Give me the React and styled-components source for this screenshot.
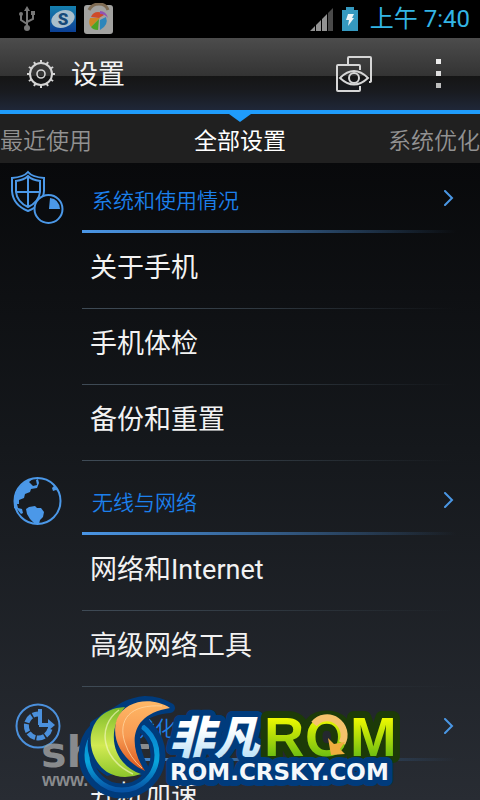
import React from "react";
import styled, { createGlobalStyle } from "styled-components";

const GlobalStyle = createGlobalStyle`
  * {
    box-sizing: border-box;
  }

  body {
    margin: 0;
    background: #000;
    font-family: Roboto, "Noto Sans CJK SC", sans-serif;
    color: #f2f2f2;
  }

  button {
    margin: 0;
    padding: 0;
    border: 0;
    background: none;
    color: inherit;
    font: inherit;
    text-align: left;
    cursor: pointer;
  }

  svg {
    display: block;
  }
`;

const Screen = styled.div`
  position: relative;
  height: 100vh;
  overflow: hidden;
  display: flex;
  flex-direction: column;
`;

const StatusBar = styled.div`
  flex: none;
  height: 38px;
  padding: 0 10px 0 16px;
  display: flex;
  align-items: center;
  justify-content: space-between;
  background: #000;
`;

const StatusGroup = styled.div`
  display: flex;
  align-items: center;
  gap: ${(props) => props.$gap}px;
`;

const Clock = styled.time`
  padding-left: 4px;
  color: #33b5e5;
  font-size: 24px;
  font-weight: 400;
  line-height: 36px;
`;

const ActionBar = styled.header`
  flex: none;
  height: 72px;
  padding: 0 26px;
  display: flex;
  align-items: center;
  background: linear-gradient(#4c4c4c 0, #333 38px, #151515 38px, #191b20 54px, #1f2738 100%);
`;

const Title = styled.h1`
  flex: 1;
  margin: 0;
  padding: 2px 0 0 15px;
  font-size: 27px;
  font-weight: 400;
  line-height: 36px;
`;

const Actions = styled.div`
  display: flex;
  gap: 32px;
`;

const IconButton = styled.button`
  width: ${(props) => props.$width}px;
  height: 48px;
  display: flex;
  align-items: center;
  justify-content: center;
`;

const TabBar = styled.nav`
  position: relative;
  flex: none;
  height: 53px;
  border-top: 4px solid #1f9cfb;
  display: flex;
  align-items: center;
  justify-content: space-between;
  background: #202020;

  &::after {
    content: "";
    position: absolute;
    top: 0;
    left: 50%;
    margin-left: -11px;
    border: 11px solid transparent;
    border-top: 8px solid #1f9cfb;
    border-bottom: 0;
  }
`;

const Tab = styled.button`
  padding-top: 6px;
  color: ${(props) => (props.$active ? "#fff" : "#929292")};
  font-size: 23px;
  font-weight: ${(props) => (props.$active ? 400 : 350)};
  line-height: 36px;
`;

const List = styled.main`
  flex: 1;
  min-height: 0;
  overflow: hidden;
  background: linear-gradient(#08090b, #15181c 45%, #282c33);
`;

const Section = styled.section`
  display: grid;
  grid-template-columns: 82px 1fr;

  & + & {
    padding-top: 4px;
  }
`;

const SectionIcon = styled.div`
  height: 70px;
  display: flex;
  align-items: center;
  padding-left: 8px;
`;

const SectionHeader = styled.button`
  width: 100%;
  height: 70px;
  padding: 0 26px 0 10px;
  display: flex;
  align-items: center;
  justify-content: space-between;
  background: linear-gradient(90deg, #4a96e6, #35608f 45%, transparent 94%) bottom / 100% 3px no-repeat;
`;

const SectionTitle = styled.span`
  padding-top: 6px;
  color: #1c80ec;
  font-size: 21px;
  font-weight: 350;
  line-height: 30px;
`;

const Item = styled.button`
  display: block;
  width: 100%;
  height: 76px;
  padding: 0 0 6px 8px;
  background: linear-gradient(90deg, #3f4b56, #2f3840 45%, transparent 94%) bottom / 100% 1px no-repeat;
  font-size: 27px;
  line-height: 36px;
`;

const Watermark = styled.svg`
  position: absolute;
  left: 40px;
  bottom: 0;
  pointer-events: none;
  font-weight: bold;

  text {
    paint-order: stroke;
    stroke-linejoin: round;
  }
`;

const UsbIcon = () => (
  <svg width="21" height="26" viewBox="0 0 21 26" fill="none" stroke="#777" strokeWidth="2">
    <path d="M11 21V3M11 18L5 14V9M11 16l6-3V8" />
    <path d="M11 0l3 5H8zM15 5h4v4h-4z" fill="#777" stroke="none" />
    <circle cx="5" cy="8" r="2" fill="#777" stroke="none" />
    <circle cx="11" cy="22" r="3" fill="#777" stroke="none" />
  </svg>
);

const SogouIcon = () => (
  <svg width="26" height="26" viewBox="0 0 26 26">
    <defs>
      <linearGradient id="sogou" x2="0" y2="1">
        <stop stopColor="#1580ae" />
        <stop offset="1" stopColor="#0b3f94" />
      </linearGradient>
    </defs>
    <rect width="26" height="26" fill="url(#sogou)" />
    <ellipse cx="13" cy="13" rx="12" ry="8.5" fill="#a9bfcc" transform="rotate(-20 13 13)" />
    <text x="13" y="19" fontSize="17" fontWeight="900" textAnchor="middle" fill="#164a79">
      S
    </text>
  </svg>
);

const MarketIcon = () => (
  <svg width="30" height="32" viewBox="0 0 30 32">
    <rect x="0" y="2" width="29" height="29" rx="3" fill="#a2a2a0" />
    <path d="M5 7Q8 1 15 1t9 6" fill="none" stroke="#7f6c54" strokeWidth="3" />
    <path d="M7 14q2-5 7-5 4 0 6 3l-5 3z" fill="#cf4a28" />
    <path d="M6 15l10 0-9 9q-3-3-1-9z" fill="#cf8422" />
    <path d="M15 16l-1 11q-5 0-7-3z" fill="#4da324" />
    <path d="M16 17l6-3q3 8-6 13z" fill="#2d86bb" />
    <path d="M16 8q6 0 8 7-3-4-8-4z" fill="#9252b2" />
  </svg>
);

const SignalIcon = () => (
  <svg width="24" height="23" viewBox="0 0 24 23">
    <path d="M0 23l5-5v5zM6 17l5-5v11H6zM12 11l5-5v17h-5z" fill="#929292" />
    <path d="M18 5l5-5v23h-5z" fill="#4a4a4a" />
  </svg>
);

const BatteryIcon = () => (
  <svg width="16" height="24" viewBox="0 0 16 24">
    <path d="M4 0h8v3h4v21H0V3h4z" fill="#3599c0" />
    <path d="M6 7h6l-2 4h2l-6 8 1-6H4z" fill="#eef5f8" />
  </svg>
);

const teeth = Array.from({ length: 12 }, (_, i) => i * 30);

const GearIcon = () => (
  <svg width="30" height="30" viewBox="0 0 30 30" fill="none" stroke="#d4d4d4" strokeWidth="2">
    <circle cx="15" cy="15" r="11" />
    <circle cx="15" cy="15" r="4" strokeWidth="1.6" />
    {teeth.map((angle) => (
      <path key={angle} d="M15 4V1" transform={`rotate(${angle} 15 15)`} />
    ))}
  </svg>
);

const PreviewIcon = () => (
  <svg width="36" height="36" viewBox="0 0 36 36" fill="none" stroke="#d6d6d6" strokeWidth="2">
    <path d="M12 8V2q0-1 1-1h21q1 0 1 1v23q0 1-2 1" />
    <path d="M24 14v-4q0-1-1-1H2q-1 0-1 1v24q0 1 1 1h21q1 0 1-1v-4" />
    <path d="M4 22q14-14 28 0-14 13-28 0z" />
    <circle cx="18" cy="22" r="5" />
  </svg>
);

const MenuIcon = () => (
  <svg width="5" height="30" viewBox="0 0 5 30">
    <rect width="5" height="5" fill="#ededed" />
    <rect y="12" width="5" height="5" fill="#dedede" />
    <rect y="24" width="5" height="5" fill="#bdbdbd" />
  </svg>
);

const Chevron = () => (
  <svg width="10" height="16" viewBox="0 0 10 16" fill="none" stroke="#4a97e4" strokeWidth="2" strokeLinecap="round">
    <path d="M1 1l7 7-7 7" />
  </svg>
);

const ShieldIcon = () => (
  <svg width="58" height="56" viewBox="0 0 58 56" fill="none" stroke="#4b98e8" strokeWidth="2">
    <path d="M20 2q-4 5-16 6v13q1 14 16 20 15-6 16-20V8Q24 7 20 2z" />
    <path d="M20 6q-4 4-12 5v11q1 10 12 15 11-5 12-15V11q-8-1-12-5zM20 6v31M8 22h24" />
    <circle cx="40.5" cy="39" r="14" fill="#0a0c0f" />
    <path d="M41 39l1-11q9 1 10 11z" fill="#4b98e8" stroke="none" />
  </svg>
);

const GlobeIcon = () => (
  <svg width="58" height="56" viewBox="0 0 58 56">
    <circle cx="29.5" cy="29" r="23" fill="none" stroke="#4b98e8" strokeWidth="2" />
    <path
      d="M11 16q6-8 15-10l-5 4 4 4 4-1-1-5 2-1 1 4-2 5-6 1-1 3-5 2-1 4-5 2v4h-2l1 4 4 1 1 4-2 1-4-5-3-1Q6 22 11 16z"
      fill="#4b98e8"
    />
    <path d="M18 37l3-2 6-1 2 2h4l3 4-1 5-3 3-1 4h-4l-5-5-3-5zM42 10q6 3 9 9l-3-1-3 1-1-3 2-2z" fill="#4b98e8" />
  </svg>
);

const BoostIcon = () => (
  <svg width="58" height="56" viewBox="0 0 58 56" fill="none" stroke="#4b90dc">
    <circle cx="30" cy="28" r="21.5" strokeWidth="2" />
    <path d="M42 31a12 12 0 1 1-12-15" strokeWidth="5" strokeDasharray="8 1.5" />
    <path d="M32 11v16M31 27h10" strokeWidth="4" />
    <path d="M40 21l7 6-7 6z" fill="#4b90dc" stroke="none" />
  </svg>
);

// Watermark pieces: grey site name, blue ring mark, then the word marks
const RomLogo = () => (
  <Watermark width="370" height="105" viewBox="-40 0 370 105" role="img" aria-label="非凡ROM">
    <defs>
      <linearGradient id="lime" x2="0" y2="1">
        <stop stopColor="#79b928" />
        <stop offset=".55" stopColor="#d2ea53" />
        <stop offset="1" stopColor="#8dc62b" />
      </linearGradient>
      <linearGradient id="orange" x2="0" y2="1">
        <stop stopColor="#ffb866" />
        <stop offset=".5" stopColor="#f79a52" />
        <stop offset="1" stopColor="#d9541a" />
      </linearGradient>
      <linearGradient id="ice" x2="0" y2="1">
        <stop offset=".4" stopColor="#fff" />
        <stop offset="1" stopColor="#a8d9f5" />
      </linearGradient>
      <linearGradient id="green" x2="0" y2="1">
        <stop offset=".2" stopColor="#f0fa00" />
        <stop offset="1" stopColor="#46ab17" />
      </linearGradient>
      <linearGradient id="ring" x2="0" y2="1">
        <stop stopColor="#0878c9" />
        <stop offset=".6" stopColor="#08a5dc" />
        <stop offset="1" stopColor="#0753a5" />
      </linearGradient>
    </defs>
    <g fill="#9b9d9f" fillOpacity=".85">
      <text x="-39" y="72" fontSize="43" fontFamily="DejaVu Sans">
        sh
      </text>
      <text x="-38" y="91" fontSize="18" fontFamily="Liberation Sans">
        www.
      </text>
      <path d="M57 49h12v5H57z" />
    </g>
    <g fill="none" stroke="#003b7c" strokeLinejoin="round">
      <circle cx="42" cy="60" r="36" strokeWidth="15" />
      <path d="M44 12Q54 7 65 6q14 0 25 7-22 2-30 12-12 20 5 51L35 70 15 30z" fill="#003b7c" strokeWidth="10" />
    </g>
    <circle cx="42" cy="60" r="35" fill="none" stroke="url(#ring)" strokeWidth="5" />
    <path
      d="M45 12Q60 12 70 26l-8 5-10 44-25 6Q5 68 8 45 14 12 45 12z"
      fill="#003b7c"
    />
    <path d="M45 12C4 14 2 60 27 77q15 9 34 2C38 72 22 42 45 12z" fill="url(#lime)" />
    <path d="M39 15C16 32 22 64 53 79" fill="none" stroke="#f3f7bd" strokeWidth="1.5" opacity=".65" />
    <path d="M90 13C73 2 46 4 37 24c-7 20 6 42 28 52C50 54 46 20 90 13z" fill="url(#orange)" />
    <path d="M82 11C51 9 37 24 45 48q5 15 17 25" fill="none" stroke="#ffd6a0" opacity=".8" />
    <text
      x="89"
      y="59"
      fill="url(#ice)"
      stroke="#003b7c"
      strokeWidth="12"
      fontSize="45"
      fontWeight="900"
      fontStyle="italic"
      fontFamily="Noto Sans CJK SC"
    >
      非凡
    </text>
    <text
      x="184 225 270"
      y="61"
      fill="url(#green)"
      stroke="#1c3a08"
      strokeWidth="14"
      fontSize="56"
      fontFamily="Liberation Sans"
    >
      ROM
    </text>
    <path d="M234 29A17 17 0 0 1 262 48" fill="none" stroke="#f6c36b" strokeWidth="7" />
    <path d="M248 43l3 17 14-1-5-5 5-7-11 2z" fill="#efad3e" />
    <text x="90" y="85" fill="#f4f8fb" stroke="#003b7c" strokeWidth="12" fontSize="23" fontFamily="DejaVu Sans">
      ROM.CRSKY.COM
    </text>
  </Watermark>
);

const sections = [
  { title: "系统和使用情况", Icon: ShieldIcon, items: ["关于手机", "手机体检", "备份和重置"] },
  { title: "无线与网络", Icon: GlobeIcon, items: ["网络和Internet", "高级网络工具"] },
  { title: "系统优化", Icon: BoostIcon, items: ["开机加速"] },
];

const App = () => {
  return (
    <Screen>
      <GlobalStyle />
      <StatusBar>
        <StatusGroup $gap={13}>
          <UsbIcon />
          <StatusGroup $gap={8}>
            <SogouIcon />
            <MarketIcon />
          </StatusGroup>
        </StatusGroup>
        <StatusGroup $gap={8}>
          <SignalIcon />
          <BatteryIcon />
          <Clock>上午 7:40</Clock>
        </StatusGroup>
      </StatusBar>
      <ActionBar>
        <GearIcon />
        <Title>设置</Title>
        <Actions>
          <IconButton $width={72} aria-label="预览">
            <PreviewIcon />
          </IconButton>
          <IconButton $width={32} aria-label="菜单">
            <MenuIcon />
          </IconButton>
        </Actions>
      </ActionBar>
      <TabBar>
        <Tab>最近使用</Tab>
        <Tab $active>全部设置</Tab>
        <Tab>系统优化</Tab>
      </TabBar>
      <List>
        {sections.map(({ title, Icon, items }) => (
          <Section key={title}>
            <SectionIcon>
              <Icon />
            </SectionIcon>
            <div>
              <SectionHeader>
                <SectionTitle>{title}</SectionTitle>
                <Chevron />
              </SectionHeader>
              {items.map((item) => (
                <Item key={item}>{item}</Item>
              ))}
            </div>
          </Section>
        ))}
      </List>
      <RomLogo />
    </Screen>
  );
};

export default App;
